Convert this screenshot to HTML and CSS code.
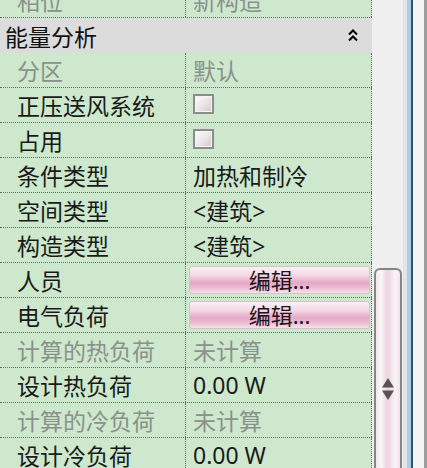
FILE: index.html
```html
<!DOCTYPE html>
<html>
  <head>
    <meta charset='utf-8' />
    <title>属性 - 能量分析</title>
    <link rel="stylesheet" href="styles.css">
  </head>
  <body>
    <div class='window'>
      <div class='props'>
        <div class='row muted'>
          <div class='name'>相位</div>
          <div class='value'>新构造</div>
        </div>
        <div class='group'>
          <span>能量分析</span>
          <svg class='collapse' width='10' height='15' viewBox='0 0 10 15'>
            <path d='M1 6.5 L5 2.5 L9 6.5 M1 12.5 L5 8.5 L9 12.5' fill='none' stroke='#000' stroke-width='2' />
          </svg>
        </div>
        <div class='row muted'>
          <div class='name'>分区</div>
          <div class='value'>默认</div>
        </div>
        <div class='row'>
          <div class='name'>正压送风系统</div>
          <div class='value'><span class='check'></span></div>
        </div>
        <div class='row'>
          <div class='name'>占用</div>
          <div class='value'><span class='check'></span></div>
        </div>
        <div class='row'>
          <div class='name'>条件类型</div>
          <div class='value'>加热和制冷</div>
        </div>
        <div class='row'>
          <div class='name'>空间类型</div>
          <div class='value'>&lt;建筑&gt;</div>
        </div>
        <div class='row'>
          <div class='name'>构造类型</div>
          <div class='value'>&lt;建筑&gt;</div>
        </div>
        <div class='row'>
          <div class='name'>人员</div>
          <div class='value btn'><button class='edit'>编辑...</button></div>
        </div>
        <div class='row'>
          <div class='name'>电气负荷</div>
          <div class='value btn'><button class='edit'>编辑...</button></div>
        </div>
        <div class='row muted'>
          <div class='name'>计算的热负荷</div>
          <div class='value'>未计算</div>
        </div>
        <div class='row'>
          <div class='name'>设计热负荷</div>
          <div class='value'>0.00 W</div>
        </div>
        <div class='row muted'>
          <div class='name'>计算的冷负荷</div>
          <div class='value'>未计算</div>
        </div>
        <div class='row'>
          <div class='name'>设计冷负荷</div>
          <div class='value'>0.00 W</div>
        </div>
      </div>
      <div class='scrollbar'>
        <div class='thumb'>
          <svg class='grip' width='12' height='22' viewBox='0 0 12 22'>
            <path d='M6 0 L12 9.5 L0 9.5 Z M0 12.5 L12 12.5 L6 22 Z' fill='#555' />
          </svg>
        </div>
      </div>
      <div class='edge'>
        <div class='shade'></div>
        <div class='blue'></div>
        <div class='dark'></div>
        <div class='light'></div>
        <div class='rim'></div>
      </div>
    </div>
  </body>
</html>
```

FILE: styles.css
```css
* {
  box-sizing: border-box;
}
body, html {
  margin: 0;
  padding: 0;
  width: 427px;
  height: 468px;
  overflow: hidden;
}
body {
  background: #efefef;
  font-family: "Noto Sans", "Noto Sans CJK SC", sans-serif;
  font-size: 23px;
  color: #1a1a1a;
}
.window {
  display: flex;
  height: 468px;
}
.props {
  width: 372px;
  flex: none;
  margin-top: -17px;
}
.row {
  display: flex;
  height: 35px;
  background: #cde8cd;
  border-bottom: 1px dotted #6a6a6a;
}
.name {
  width: 186px;
  padding-left: 17px;
  border-right: 1px dotted #6a6a6a;
  display: flex;
  align-items: center;
  white-space: nowrap;
}
.value {
  width: 186px;
  padding-left: 7px;
  border-right: 1px dotted #6a6a6a;
  display: flex;
  align-items: center;
  white-space: nowrap;
}
.muted {
  color: #8b918b;
}
.group {
  display: flex;
  align-items: center;
  justify-content: space-between;
  height: 35px;
  padding: 0 14px 0 5px;
  background: #dcdcdc;
  color: #111;
}
.check {
  align-self: flex-start;
  margin-top: 6px;
  width: 21px;
  height: 20px;
  border: 2px solid #8c8c8c;
  box-shadow: inset 0 0 0 1px #f4f4f4;
  background: linear-gradient(135deg, #fdfdfd 0%, #ece6e9 50%, #d3c5cc 100%);
}
.value.btn {
  padding: 3px 1px 3px 3px;
}
.edit {
  width: 100%;
  height: 28px;
  margin: 0;
  padding: 0;
  border: 1px solid #d5c3cc;
  border-radius: 3px;
  font-family: inherit;
  font-size: 22px;
  line-height: 26px;
  color: #20141a;
  background: linear-gradient(to bottom, #fbf0f5 0%, #f4d8e5 32%, #e6a8c5 60%, #ebb9d0 78%, #f7e1eb 100%);
}
.scrollbar {
  width: 31px;
  flex: none;
  padding: 268px 1px 0 2px;
  background: #efefef;
}
.thumb {
  height: 220px;
  border: 2px solid #858585;
  border-bottom: none;
  border-radius: 6px 6px 0 0;
  display: flex;
  justify-content: center;
  padding-top: 108px;
  background: linear-gradient(to right, #f2e8ec 0%, #fbf6f8 22%, #ecd5df 45%, #efdce4 58%, #faf4f6 80%, #efe4e9 100%);
}
.edge {
  flex: 1;
  display: flex;
}
.shade {
  width: 4px;
  background: #e4e4e4;
}
.blue {
  width: 4px;
  background: #a7cfe8;
}
.dark {
  width: 2px;
  background: #2e5462;
}
.light {
  flex: 1;
  background: #f4f4f4;
}
.rim {
  width: 3px;
  background: #9d9d9d;
}
```
